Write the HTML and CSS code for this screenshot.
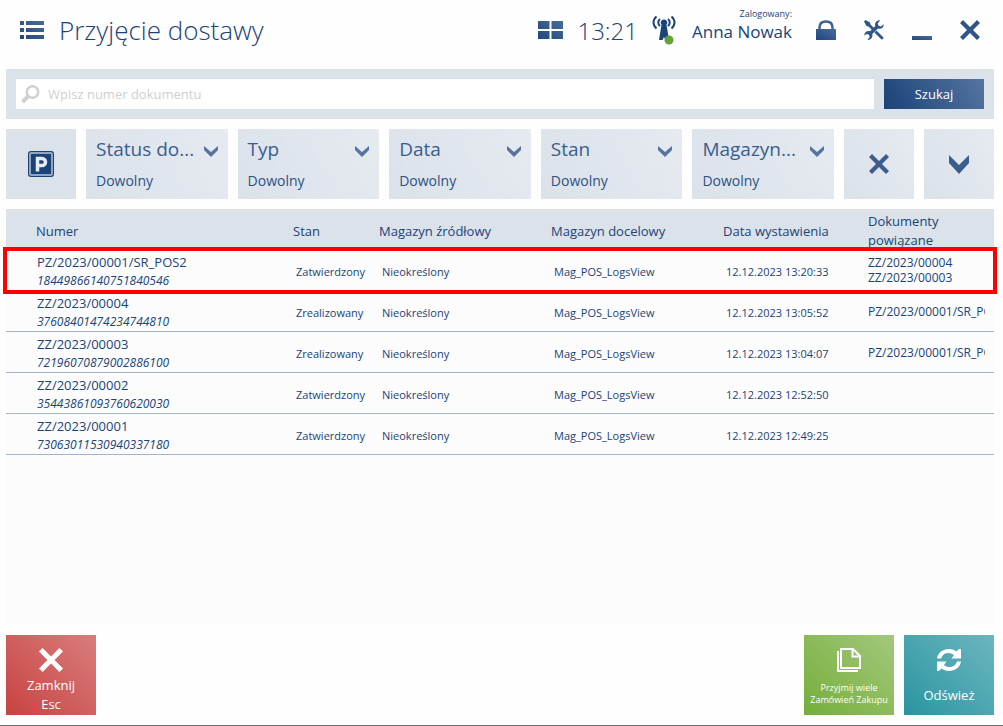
FILE: index.html
```html
<!DOCTYPE html>
<html lang="pl">
<head>
    <meta charset="UTF-8">
    <meta name="viewport" content="width=device-width, initial-scale=1.0">
    <title>Przyjęcie dostawy</title>
    <link rel="stylesheet" href="styles.css">
</head>
<body>
    <!-- Wspólne definicje ikon -->
    <svg class="defs" width="0" height="0" aria-hidden="true">
        <defs>
            <linearGradient id="navy" x1="0" y1="1" x2="1" y2="0">
                <stop offset="0" stop-color="#1f487f"/>
                <stop offset="1" stop-color="#4a6b98"/>
            </linearGradient>
            <symbol id="cross" viewBox="0 0 20 20">
                <path d="M3 0 10 7 17 0 20 3 13 10 20 17 17 20 10 13 3 20 0 17 7 10 0 3z"/>
            </symbol>
            <symbol id="chevron" viewBox="0 0 20 19">
                <path d="M0 0 10 10 20 0V8L10 19 0 8z"/>
            </symbol>
        </defs>
    </svg>

    <header class="topbar">
        <button class="icon-btn" type="button" aria-label="Menu">
            <svg width="24" height="18" viewBox="0 0 24 18" fill="url(#navy)"><path d="M0 0h4v4H0zM6 0h18v4H6zM0 7h4v4H0zM6 7h18v4H6zM0 14h4v4H0zM6 14h18v4H6z"/></svg>
        </button>
        <h1>Przyjęcie dostawy</h1>
        <div class="tools">
            <button class="icon-btn" type="button" aria-label="Pulpit">
                <svg width="25" height="18" viewBox="0 0 25 18" fill="url(#navy)"><path d="M0 0h11.500v8H0zM13.500 0H25v8H13.500zM0 10h11.500v8H0zM13.500 10H25v8H13.500z"/></svg>
            </button>
            <span class="clock">13:21</span>
            <svg class="signal" width="24" height="30" viewBox="0 0 24 30">
                <g fill="none" stroke="#1a4379" stroke-width="2">
                    <path d="M4.500 1.500C.5 5 .5 10 4.500 13.500M8 4C5.700 6 5.700 9 8 11M19.500 1.500c4 3.500 4 8.500 0 12M16 4c2.300 2 2.300 5 0 7"/>
                </g>
                <path fill="#1a4379" d="M12 4.500a3 3 0 0 1 2.500 5L17 25h-3.500L12 22l-1.500 3H7l2.500-15.500a3 3 0 0 1 2.500-5z"/>
                <circle cx="17" cy="25" r="4.500" fill="#689f38"/>
            </svg>
            <div class="user">
                <small>Zalogowany:</small>
                <span>Anna Nowak</span>
            </div>
            <button class="icon-btn lock" type="button" aria-label="Zablokuj">
                <svg width="20" height="20" viewBox="0 0 20 20"><path fill="none" stroke="#3f6190" stroke-width="2.500" d="M3.500 10V7.500C3.500 3.500 6 1.500 10 1.500s6.500 2 6.500 6V10"/><path fill="url(#navy)" d="M0 9h20v11H0z"/></svg>
            </button>
            <button class="icon-btn" type="button" aria-label="Narzędzia">
                <svg width="20" height="20" viewBox="0 0 20 20" fill="#315588">
                    <path d="M0 1.500 1.500 0 6 2.500l.5 2 4 4-2 2-4-4-2-.5zM12.500 10.500 19.500 17.500c.5.700-1.300 2.500-2 2L10.500 12.500z"/>
                    <path d="M19.700 4.200 17 6.500l-2.500-.800-.8-2.500L16.300.3C13 0 10.500 2.500 11.300 6L6 11.300C3 10.500.3 12.500.3 15.500L2.700 14l2.300.700.700 2.300L3.500 20c3.500 0 5.500-2.500 4.800-6L14 8.500c3.500.8 6-1 5.700-4.300z"/>
                </svg>
            </button>
            <button class="icon-btn" type="button" aria-label="Minimalizuj">
                <svg width="20" height="20" viewBox="0 0 20 20" fill="url(#navy)"><path d="M0 16h20v4H0z"/></svg>
            </button>
            <button class="icon-btn" type="button" aria-label="Zamknij okno">
                <svg width="20" height="20" fill="#315588"><use href="#cross"/></svg>
            </button>
        </div>
    </header>

    <main>
        <form class="search">
            <div class="search-box">
                <svg width="19" height="19" viewBox="0 0 19 19" fill="none" stroke="#d0d0d0"><circle cx="11.500" cy="7" r="5.700" stroke-width="2.500"/><path stroke-width="4" d="M7 11.500 1.500 17"/></svg>
                <input type="text" aria-label="Numer dokumentu" placeholder="Wpisz numer dokumentu">
            </div>
            <button type="submit">Szukaj</button>
        </form>

        <div class="filters">
            <button class="tile" type="button" aria-label="Parking">
                <svg width="26" height="26" viewBox="0 0 26 26"><rect width="26" height="26" rx="3" fill="#1a4379"/><rect x="2" y="2" width="22" height="22" rx="1" fill="none" stroke="#b9c6d8" stroke-width="1.500"/><path fill="none" stroke="#e6ebf1" stroke-width="3.500" d="M9.500 20.500V7.500h4.500a3.200 3.200 0 0 1 0 7H9.500"/></svg>
            </button>
            <div class="filter">
                <label for="status">Status do...</label>
                <svg width="14" height="12" viewBox="0 0 14 12"><path d="M0 0 7 6 14 0V4L7 11 0 4z"/></svg>
                <select id="status"><option>Dowolny</option></select>
            </div>
            <div class="filter">
                <label for="typ">Typ</label>
                <svg width="14" height="12" viewBox="0 0 14 12"><path d="M0 0 7 6 14 0V4L7 11 0 4z"/></svg>
                <select id="typ"><option>Dowolny</option></select>
            </div>
            <div class="filter">
                <label for="data">Data</label>
                <svg width="14" height="12" viewBox="0 0 14 12"><path d="M0 0 7 6 14 0V4L7 11 0 4z"/></svg>
                <select id="data"><option>Dowolny</option></select>
            </div>
            <div class="filter">
                <label for="stan">Stan</label>
                <svg width="14" height="12" viewBox="0 0 14 12"><path d="M0 0 7 6 14 0V4L7 11 0 4z"/></svg>
                <select id="stan"><option>Dowolny</option></select>
            </div>
            <div class="filter">
                <label for="magazyn">Magazyn...</label>
                <svg width="14" height="12" viewBox="0 0 14 12"><path d="M0 0 7 6 14 0V4L7 11 0 4z"/></svg>
                <select id="magazyn"><option>Dowolny</option></select>
            </div>
            <button class="tile" type="button" aria-label="Wyczyść filtry">
                <svg width="20" height="20"><use href="#cross"/></svg>
            </button>
            <button class="tile" type="button" aria-label="Rozwiń filtry">
                <svg width="20" height="19"><use href="#chevron"/></svg>
            </button>
        </div>

        <div class="documents">
            <table>
                <colgroup>
                    <col>
                    <col class="c-state">
                    <col class="c-store">
                    <col class="c-store">
                    <col class="c-date">
                    <col class="c-links">
                </colgroup>
                <thead>
                    <tr>
                        <th>Numer</th>
                        <th>Stan</th>
                        <th>Magazyn źródłowy</th>
                        <th>Magazyn docelowy</th>
                        <th>Data wystawienia</th>
                        <th>Dokumenty powiązane</th>
                    </tr>
                </thead>
                <tbody>
                    <tr class="selected">
                        <td>PZ/2023/00001/SR_POS2<em>18449866140751840546</em></td>
                        <td>Zatwierdzony</td>
                        <td>Nieokreślony</td>
                        <td>Mag_POS_LogsView</td>
                        <td>12.12.2023 13:20:33</td>
                        <td><div>ZZ/2023/00004</div><div>ZZ/2023/00003</div></td>
                    </tr>
                    <tr>
                        <td>ZZ/2023/00004<em>37608401474234744810</em></td>
                        <td>Zrealizowany</td>
                        <td>Nieokreślony</td>
                        <td>Mag_POS_LogsView</td>
                        <td>12.12.2023 13:05:52</td>
                        <td><div>PZ/2023/00001/SR_POS2</div></td>
                    </tr>
                    <tr>
                        <td>ZZ/2023/00003<em>72196070879002886100</em></td>
                        <td>Zrealizowany</td>
                        <td>Nieokreślony</td>
                        <td>Mag_POS_LogsView</td>
                        <td>12.12.2023 13:04:07</td>
                        <td><div>PZ/2023/00001/SR_POS2</div></td>
                    </tr>
                    <tr>
                        <td>ZZ/2023/00002<em>35443861093760620030</em></td>
                        <td>Zatwierdzony</td>
                        <td>Nieokreślony</td>
                        <td>Mag_POS_LogsView</td>
                        <td>12.12.2023 12:52:50</td>
                        <td></td>
                    </tr>
                    <tr>
                        <td>ZZ/2023/00001<em>73063011530940337180</em></td>
                        <td>Zatwierdzony</td>
                        <td>Nieokreślony</td>
                        <td>Mag_POS_LogsView</td>
                        <td>12.12.2023 12:49:25</td>
                        <td></td>
                    </tr>
                </tbody>
            </table>
        </div>
    </main>

    <footer>
        <button class="action close" type="button">
            <svg width="24" height="24" fill="#fff"><use href="#cross"/></svg>
            <span>Zamknij</span>
            <span>Esc</span>
        </button>
        <button class="action accept" type="button">
            <svg width="24" height="24" viewBox="0 0 24 24" fill="none" stroke="#fff" stroke-width="2"><path d="M4 1h12l7 7v12H4z"/><path d="M15.500 1v7.500H23M1 3v20h20"/></svg>
            <span>Przyjmij wiele</span>
            <span>Zamówień Zakupu</span>
        </button>
        <button class="action refresh" type="button">
            <svg width="24" height="24" viewBox="0 0 24 24" fill="#fff"><path d="M0 10.500C1 4.500 6 1 12 1c3 0 5.500 1 7.500 2.500L22 1h2v9.500h-9.500L17 7C12.500 3.500 6 4.500 4 10.500z"/><path d="M24 13.500c-1 6-6 9.500-12 9.500-3 0-5.500-1-7.500-2.500L2 23H0v-9.500h9.500L7 17c4.500 3.500 11 2.500 13-3.500z"/></svg>
            <span>Odśwież</span>
        </button>
    </footer>
</body>
</html>
```
FILE: styles.css
```css
* {
    box-sizing: border-box;
}
body {
    margin: 0;
    min-height: 100vh;
    display: flex;
    flex-direction: column;
    background: #fefefe;
    border-bottom: 1px solid #707070;
    color: #1a4379;
    font-family: "Open Sans", "Noto Sans", sans-serif;
    font-size: 13px;
}
button, input, select {
    font-family: inherit;
    color: inherit;
    border: 0;
    border-radius: 0;
    padding: 0;
    margin: 0;
}
button {
    cursor: pointer;
}
svg {
    display: block;
    flex: none;
}
.defs {
    position: absolute;
}

/* Pasek górny */
.topbar {
    display: flex;
    align-items: center;
    height: 69px;
    padding: 0 23px 9px 20px;
}
.icon-btn {
    background: none;
}
h1 {
    margin: 0 0 0 15px;
    font-size: 26px;
    font-weight: 300;
    white-space: nowrap;
}
.tools {
    display: flex;
    align-items: center;
    margin-left: auto;
}
.clock {
    margin: 0 14px;
    font-size: 24px;
    font-weight: 300;
}
.user {
    display: flex;
    flex-direction: column;
    align-items: flex-end;
    margin: 0 24px 0 16px;
    padding-bottom: 8px;
    font-size: 17px;
    line-height: 24px;
    white-space: nowrap;
}
.user small {
    font-size: 9px;
    line-height: 12px;
}
.tools .icon-btn + .icon-btn {
    margin-left: 28px;
}

/* Wyszukiwarka */
main {
    flex: 1;
    display: flex;
    flex-direction: column;
    gap: 10px;
    padding: 0 9px 10px 6px;
}
.search {
    display: flex;
    gap: 10px;
    padding: 10px;
    background: #dbe2ea;
}
.search-box {
    flex: 1;
    display: flex;
    align-items: center;
    gap: 8px;
    height: 30px;
    padding-left: 5px;
    background: #fff;
}
.search-box input {
    flex: 1;
    height: 30px;
    background: none;
    font-size: 13px;
    outline: 0;
}
.search-box input::placeholder {
    color: #cfcfcf;
}
.search button {
    width: 100px;
    background: linear-gradient(60deg, #1a4379, #56749f);
    color: #fff;
    font-size: 13px;
}

/* Filtry */
.filters {
    display: grid;
    grid-template-columns: 70px repeat(5, 1fr) 70px 70px;
    gap: 10px;
}
.tile, .filter {
    height: 70px;
    background: linear-gradient(60deg, #dbe2ea, #e6eaf1);
    fill: #3a5d8e;
}
.tile {
    display: flex;
    align-items: center;
    justify-content: center;
}
.tile:first-child {
    background: #dbe2ea;
}
.filter {
    display: grid;
    grid-template-columns: 1fr auto;
    grid-template-rows: 40px 22px;
    align-items: center;
    padding: 0 10px;
    color: #3a5d8e;
}
.filter label {
    font-size: 19px;
    white-space: nowrap;
}
.filter svg {
    margin-top: 6px;
    fill: #56749f;
}
.filter select {
    appearance: none;
    grid-column: 1 / -1;
    background: none;
    color: #2c5184;
    font-size: 14px;
}

/* Lista dokumentów */
.documents {
    flex: 1;
    background: #fcfcfc;
}
table {
    width: 100%;
    table-layout: fixed;
    border-collapse: separate;
    border-spacing: 0;
}
.c-state {
    width: 86px;
}
.c-store {
    width: 172px;
}
.c-date {
    width: 145px;
}
.c-links {
    width: 136px;
}
th {
    height: 41px;
    padding: 3px 0 0 10px;
    background: #dbe2ea;
    font-size: 13px;
    font-weight: 400;
    line-height: 19px;
    text-align: left;
}
th:first-child {
    padding-left: 30px;
}
td {
    height: 41px;
    padding: 2px 0 0 13px;
    border-bottom: 1px solid #a3b4cb;
    font-size: 11px;
    line-height: 15px;
    white-space: nowrap;
}
td:first-child {
    padding: 3px 0 0 31px;
    font-size: 13px;
    line-height: 19px;
}
td:last-child {
    padding: 0 9px 0 10px;
    font-size: 12px;
}
td div {
    overflow: hidden;
}
td em {
    display: block;
    font-size: 12px;
    line-height: 18px;
}
.selected {
    outline: 4px solid #f00;
    outline-offset: -1px;
}

/* Przyciski dolne */
footer {
    display: flex;
    gap: 10px;
    padding: 0 9px 10px 6px;
}
.action {
    display: flex;
    flex-direction: column;
    align-items: center;
    width: 90px;
    height: 80px;
    padding-top: 13px;
    color: #fff;
    font-size: 13px;
    line-height: 19px;
    white-space: nowrap;
}
.action svg {
    margin-bottom: 4px;
}
.close {
    margin-right: auto;
    background: linear-gradient(45deg, #c84242, #d87e7c);
}
.accept {
    background: linear-gradient(45deg, #74ae3a, #a3c87c);
    font-size: 9px;
    line-height: 12px;
}
.accept svg {
    margin-bottom: 10px;
}
.refresh {
    background: linear-gradient(45deg, #2995a0, #6db6bf);
}
.refresh svg {
    margin-bottom: 14px;
}
```
